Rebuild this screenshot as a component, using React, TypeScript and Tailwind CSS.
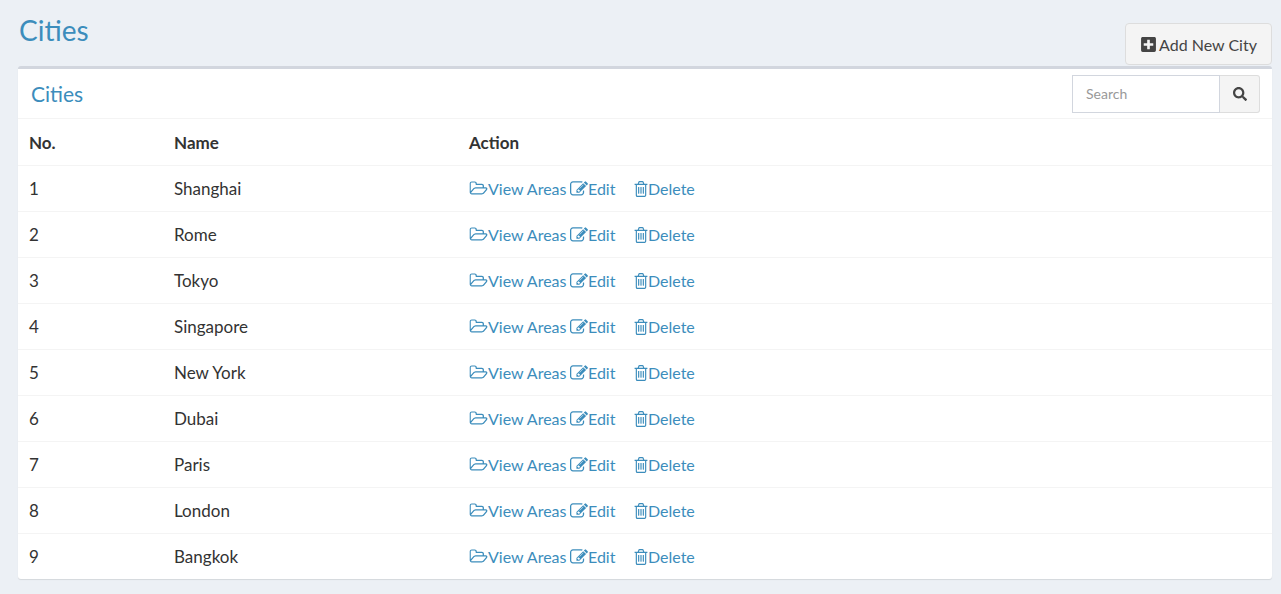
import { FaPlusSquare, FaSearch } from "react-icons/fa";

const cities = ["Shanghai", "Rome", "Tokyo", "Singapore", "New York", "Dubai", "Paris", "London", "Bangkok"];

function FolderIcon() {
  return (
    <svg viewBox="0 128 2048 1536" fill="currentColor" className="h-[15px] w-[19px] shrink-0">
      <path d="M1845 931q0-35-53-35h-1088q-40 0-85.5 21.5t-71.5 52.5l-294 363q-18 24-18 40 0 35 53 35h1088q40 0 86-22t71-53l294-363q18-22 18-39zm-1141-163h768v-160q0-40-28-68t-68-28h-576q-40 0-68-28t-28-68v-64q0-40-28-68t-68-28h-320q-40 0-68 28t-28 68v853l256-315q44-53 116-87.5t140-34.5zm1280 163q0 62-46 120l-295 363q-43 53-116 87.5t-140 34.5h-1088q-92 0-158-66t-66-158v-960q0-92 66-158t158-66h320q92 0 158 66t66 158v32h544q92 0 158 66t66 158v160h192q54 0 99 24.5t67 70.5q15 32 15 68z" />
    </svg>
  );
}

function EditIcon() {
  return (
    <svg viewBox="0 128 1792 1536" fill="currentColor" className="h-[16px] w-[18px] shrink-0">
      <path d="M888 1184l116-116-152-152-116 116v56h96v96h56zm440-720q-16-16-33 1l-350 350q-17 17-1 33t33-1l350-350q17-17 1-33zm80 594v190q0 119-84.5 203.5t-203.5 84.5h-832q-119 0-203.5-84.5t-84.5-203.5v-832q0-119 84.5-203.5t203.5-84.5h832q63 0 117 25 15 7 18 23 3 17-9 29l-49 49q-14 14-32 8-23-6-45-6h-832q-66 0-113 47t-47 113v832q0 66 47 113t113 47h832q66 0 113-47t47-113v-126q0-13 9-22l64-64q15-15 35-7t20 29zm-96-738l288 288-672 672h-288v-288zm444 132l-92 92-288-288 92-92q28-28 68-28t68 28l152 152q28 28 28 68t-28 68z" />
    </svg>
  );
}

function TrashIcon() {
  return (
    <svg viewBox="128 128 1536 1536" fill="currentColor" className="h-[16px] w-[14px] shrink-0" preserveAspectRatio="none">
      <path d="M704 736v576q0 14-9 23t-23 9h-64q-14 0-23-9t-9-23v-576q0-14 9-23t23-9h64q14 0 23 9t9 23zm256 0v576q0 14-9 23t-23 9h-64q-14 0-23-9t-9-23v-576q0-14 9-23t23-9h64q14 0 23 9t9 23zm256 0v576q0 14-9 23t-23 9h-64q-14 0-23-9t-9-23v-576q0-14 9-23t23-9h64q14 0 23 9t9 23zm128 724v-948h-896v948q0 22 7 40.5t14.5 27 10.5 8.5h832q3 0 10.5-8.5t14.5-27 7-40.5zm-672-1076h448l-48-117q-7-9-17-11h-317q-10 2-17 11zm928 32v64q0 14-9 23t-23 9h-96v948q0 83-47 143.5t-113 60.5h-832q-66 0-113-58.5t-47-141.5v-952h-96q-14 0-23-9t-9-23v-64q0-14 9-23t23-9h309l70-167q15-37 54-63t79-26h320q40 0 79 26t54 63l70 167h309q14 0 23 9t9 23z" />
    </svg>
  );
}

export default function App() {
  return (
    <div className="h-[594px] overflow-hidden bg-[#ecf0f5] px-[18px] pt-[10px] pr-[9px] font-['Lato','Noto_Sans',sans-serif] text-[17px] text-[#333]">
      <div className="flex justify-between">
        <h1 className="mt-px pl-px text-[28px] leading-[38px] text-[#3c8dbc]">Cities</h1>
        <button className="mt-[13px] flex h-[42px] w-[147px] items-center justify-center gap-[2px] rounded-[4px] border border-[#ddd] bg-[#f4f4f4] pt-px text-[16px] whitespace-nowrap text-[#444]">
          <FaPlusSquare className="text-[17px]" />
          Add New City
        </button>
      </div>
      <div className="mt-px rounded-[3px] border-t-[3px] border-[#d2d6de] bg-white shadow-[0_1px_1px_rgba(0,0,0,0.1)]">
        <div className="flex h-[50px] items-center justify-between border-b border-[#f4f4f4] pl-[13px] pr-[12px]">
          <h3 className="text-[21px] text-[#3c8dbc]">Cities</h3>
          <div className="flex h-[38px]">
            <input
              placeholder="Search"
              className="w-[148px] border border-[#d2d6de] px-[13px] text-[14px] outline-none placeholder:text-[#999]"
            />
            <button className="flex w-[40px] items-center justify-center rounded-r-[3px] border border-l-0 border-[#ddd] bg-[#f4f4f4] text-[#444]">
              <FaSearch className="text-[14px]" />
            </button>
          </div>
        </div>
        <table className="w-full table-fixed border-collapse">
          <thead>
            <tr className="h-[46px] border-b border-[#f4f4f4] text-left font-bold">
              <th className="w-[156px] pl-[11px] pt-px">No.</th>
              <th className="w-[295px] pt-px">Name</th>
              <th className="pt-px">Action</th>
            </tr>
          </thead>
          <tbody>
            {cities.map((city, i) => (
              <tr key={city} className="h-[46px] border-b border-[#f4f4f4] last:border-b-0">
                <td className="pl-[11px] pt-px">{i + 1}</td>
                <td className="pt-px">{city}</td>
                <td className="pt-px text-[16px] whitespace-nowrap text-[#3c8dbc]">
                  <div className="flex items-center">
                    <FolderIcon />
                    <span className="w-[82px]">View Areas</span>
                    <EditIcon />
                    <span className="w-[46px]">Edit</span>
                    <TrashIcon />
                    <span>Delete</span>
                  </div>
                </td>
              </tr>
            ))}
          </tbody>
        </table>
      </div>
    </div>
  );
}
